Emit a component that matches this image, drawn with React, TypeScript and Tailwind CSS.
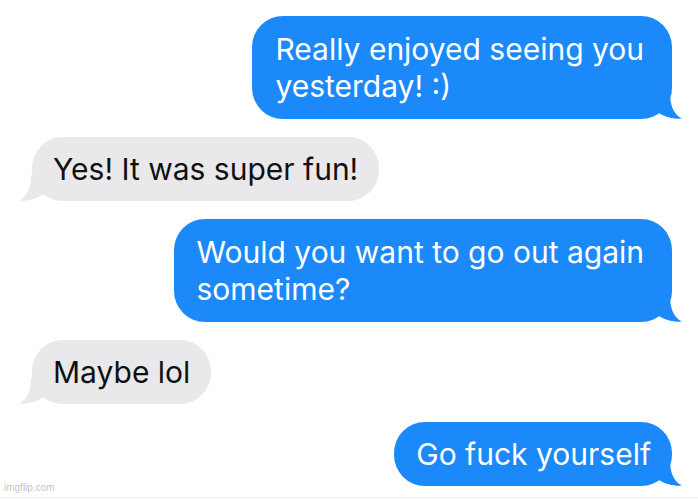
import React from 'react';

interface Message {
  id: number;
  text: string[];
  fromMe: boolean;
}

const messages: Message[] = [
  { id: 1, text: ['Really enjoyed seeing you', 'yesterday! :)'], fromMe: true },
  { id: 2, text: ['Yes! It was super fun!'], fromMe: false },
  { id: 3, text: ['Would you want to go out again', 'sometime?'], fromMe: true },
  { id: 4, text: ['Maybe lol'], fromMe: false },
  { id: 5, text: ['Go fuck yourself'], fromMe: true },
];

// little hook on the bubble's bottom corner
const Tail = ({ fromMe }: { fromMe: boolean }) => {
  if (fromMe) {
    return (
      <svg className="absolute bottom-0 right-[-11px]" width="26" height="26" viewBox="0 0 26 26">
        <path d="M0 0 H13 C13 11 16 21 25 25.6 C18 26.2 8 24.5 2 20 L0 20 Z" fill="#1b89fa" />
      </svg>
    );
  }
  return (
    <svg className="absolute bottom-0 left-[-14px]" width="26" height="26" viewBox="0 0 26 26">
      <path d="M26 0 H13 C13 11 10 21 1 25.6 C8 26.2 18 24.5 24 20 L26 20 Z" fill="#e9e9eb" />
    </svg>
  );
};

const App = () => {
  return (
    <div className="relative w-[698px] h-[499px] bg-white overflow-hidden font-['Inter',sans-serif]">
      <div className="flex flex-col gap-[18px] pt-[16px]">
        {messages.map((m) => {
          const multi = m.text.length > 1;
          return (
            <div key={m.id} className={`flex ${m.fromMe ? 'justify-end pr-[26px]' : 'justify-start pl-[32px]'}`}>
              <div
                className={`relative rounded-[31px] text-[30px] leading-[37px] ${
                  multi ? 'pt-[15px] pb-[14px] pl-[23px] pr-[28px]' : 'pt-[14px] pb-[13px] pr-[21px]'
                } ${!multi && m.fromMe ? 'pl-[22px]' : ''} ${!multi && !m.fromMe ? 'pl-[21px]' : ''} ${
                  m.fromMe ? 'bg-[#1b89fa] text-white' : 'bg-[#e9e9eb] text-[#111111]'
                }`}
              >
                <Tail fromMe={m.fromMe} />
                <div className="relative">
                  {m.text.map((line, i) => (
                    <div key={i} className="whitespace-nowrap">{line}</div>
                  ))}
                </div>
              </div>
            </div>
          );
        })}
      </div>

      {/* watermark */}
      <div className="absolute left-[4px] bottom-[4px] text-[10px] text-[#c4c4c4] font-['Liberation_Sans',sans-serif]">
        imgflip.com
      </div>
      <div className="absolute left-0 right-0 bottom-[1px] h-px bg-[#eef2f8]" />
    </div>
  );
};

export default App;
